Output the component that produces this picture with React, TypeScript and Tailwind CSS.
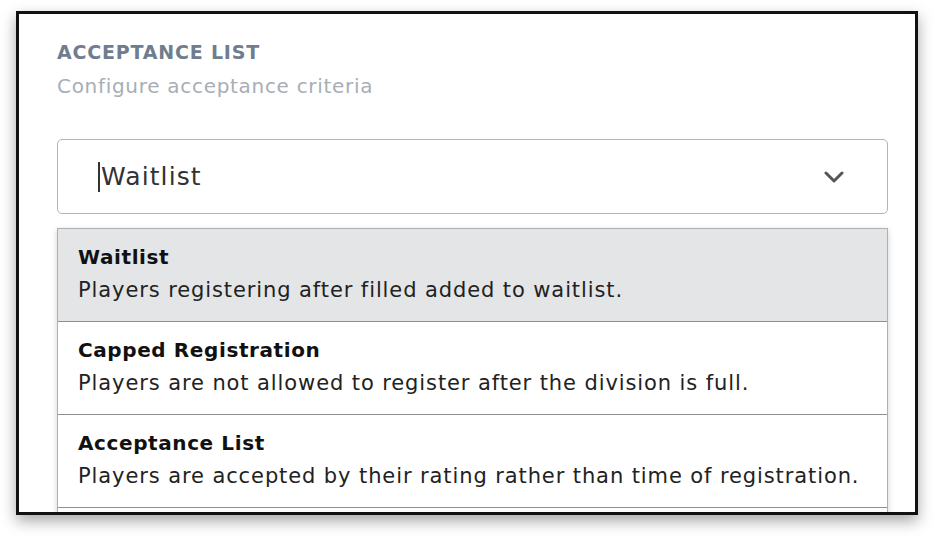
const options = [
  {
    title: "Waitlist",
    description: "Players registering after filled added to waitlist.",
  },
  {
    title: "Capped Registration",
    description: "Players are not allowed to register after the division is full.",
  },
  {
    title: "Acceptance List",
    description: "Players are accepted by their rating rather than time of registration.",
  },
];

// Acceptance criteria select, shown open
export default function App() {
  const selected = "Waitlist";

  return (
    <div
      className="h-[538px] w-[936px] bg-white pl-4 pt-[11px]"
      style={{ fontFamily: '"DejaVu Sans", sans-serif' }}
    >
      <div className="h-[504px] w-[902px] overflow-hidden border-[3px] border-[#111] bg-white shadow-[0_6px_14px_rgba(0,0,0,0.35)]">
        <div className="pl-[38px] pr-[27px] pt-6">
          {/* Section header */}
          <div className="text-[19px] font-semibold uppercase leading-[28px] tracking-[0.8px] text-[#6f7d8f]">
            Acceptance List
          </div>
          <div className="mt-[6px] text-[20px] leading-[28px] tracking-[0.7px] text-[#a7aeb6]">
            Configure acceptance criteria
          </div>

          {/* Select box */}
          <div className="mt-[39px] flex h-[75px] items-center justify-between rounded-[5px] border border-[#b3b3b3] pl-[40px] pr-[43px]">
            <div className="flex items-center">
              <span className="mr-[1px] h-[30px] w-[2px] bg-[#333]" />
              <span className="text-[25px] leading-[30px] tracking-[1.1px] text-[#333]">
                {selected}
              </span>
            </div>
            <svg width="20" height="12" viewBox="0 0 20 12" fill="none">
              <path
                d="M2 2 L10 10 L18 2"
                stroke="#555"
                strokeWidth="3"
                strokeLinecap="round"
                strokeLinejoin="round"
              />
            </svg>
          </div>

          {/* Options list */}
          <div className="mt-[14px] border-x border-t border-[#b0b0b0] shadow-[0_2px_6px_rgba(0,0,0,0.18)]">
            {options.map((opt) => (
              <div
                key={opt.title}
                className={`border-b border-[#8f8f8f] pb-[16px] pl-[20px] pt-[13px] ${
                  opt.title === selected ? "bg-[#e4e5e7]" : "bg-white"
                }`}
              >
                <div className="text-[20px] font-bold leading-[30px] tracking-[0.6px] text-[#111]">
                  {opt.title}
                </div>
                <div className="mt-[3px] text-[21px] leading-[30px] tracking-[0.9px] text-[#222]">
                  {opt.description}
                </div>
              </div>
            ))}
            {/* next option, scrolled out of view */}
            <div className="h-[30px] bg-white" />
          </div>
        </div>
      </div>
    </div>
  );
}
